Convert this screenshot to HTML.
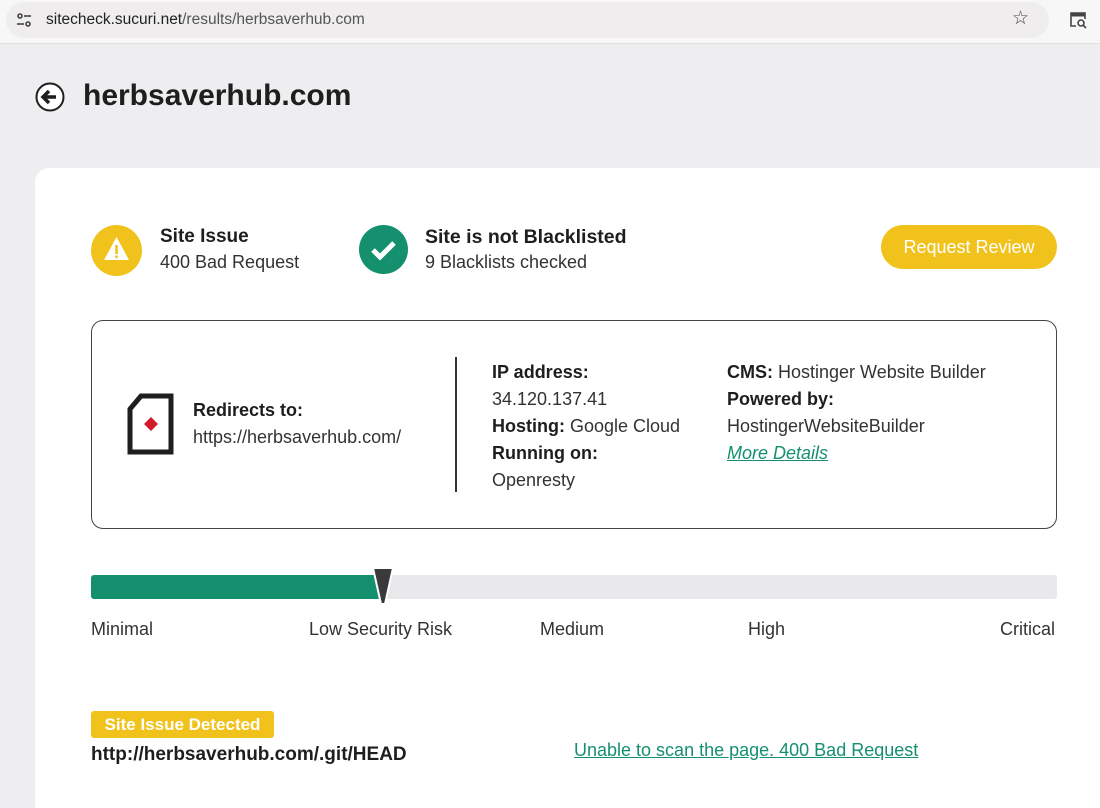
<!DOCTYPE html>
<html><head><style>
*{margin:0;padding:0;box-sizing:border-box}
body{width:1100px;height:779px;overflow:hidden;background:#eeedef;font-family:"Liberation Sans",Arial,sans-serif;color:#2b2b2b;position:relative}
.top{position:absolute;left:0;top:0;width:1100px;height:44px;background:#f8f7f7;border-bottom:1px solid #e2e1e1}
.pill{position:absolute;left:6px;top:2px;width:1043px;height:36px;background:#efeded;border-radius:18px}
.abs{position:absolute}
.card{position:absolute;left:35px;top:168px;width:1080px;height:640px;background:#fff;border-radius:14px 0 0 0}
.b{font-weight:bold;color:#1e1e1e}
.t{font-size:18px}
</style></head><body>
<div class="top"><div class="pill"></div>
<svg class="abs" style="left:14px;top:10px" width="20" height="20" viewBox="0 0 20 20" fill="none" stroke="#444" stroke-width="1.6"><circle cx="6" cy="6" r="2"/><line x1="10" y1="6" x2="17" y2="6"/><circle cx="14" cy="14" r="2"/><line x1="3" y1="14" x2="10" y2="14"/></svg>
<div class="abs" style="left:46px;top:11px;font-size:15.5px;color:#222">sitecheck.sucuri.net<span style="color:#555">/results/herbsaverhub.com</span></div>
<div class="abs" style="left:1012px;top:7px;font-size:19px;color:#444">☆</div>
<svg class="abs" style="left:1068px;top:10px" width="20" height="20" viewBox="0 0 20 20" fill="none" stroke="#444" stroke-width="1.6"><path d="M8 16H3V3h14v6"/><line x1="3" y1="5" x2="17" y2="5" stroke-width="3"/><circle cx="13" cy="13" r="3"/><line x1="15" y1="15" x2="18" y2="18"/></svg>
</div>
<svg class="abs" style="left:35px;top:82px" width="30" height="30" viewBox="0 0 30 30"><circle cx="15" cy="15" r="13.5" fill="#fff" stroke="#1e1e1e" stroke-width="2"/><path d="M8 15h13M14 9l-6 6 6 6" stroke="#1e1e1e" stroke-width="3.5" fill="none"/></svg>
<div class="abs b" style="left:83px;top:79px;font-size:30px">herbsaverhub.com</div>
<div class="card"></div>
<svg class="abs" style="left:91px;top:225px" width="51" height="51" viewBox="0 0 51 51"><circle cx="25.5" cy="25.5" r="25.5" fill="#f2c21c"/><path d="M25.5 12L38 35H13z" fill="#fff"/><rect x="24.2" y="20" width="2.6" height="9" fill="#f2c21c"/><rect x="24.2" y="30.5" width="2.6" height="2.6" fill="#f2c21c"/></svg>
<div class="abs b" style="left:160px;top:226px;font-size:19px">Site Issue</div>
<div class="abs t" style="left:160px;top:252px;color:#333">400 Bad Request</div>
<svg class="abs" style="left:359px;top:225px" width="49" height="49" viewBox="0 0 49 49"><circle cx="24.5" cy="24.5" r="24.5" fill="#14906e"/><path d="M14 25l7 7 14-14" stroke="#fff" stroke-width="5" fill="none"/></svg>
<div class="abs b" style="left:425px;top:226px;font-size:19.5px">Site is not Blacklisted</div>
<div class="abs t" style="left:425px;top:252px;color:#333">9 Blacklists checked</div>
<div class="abs" style="left:881px;top:225px;width:176px;height:44px;border-radius:22px;background:#f2c21c;color:#fff;font-size:18px;text-align:center;line-height:44px">Request Review</div>
<div class="abs" style="left:91px;top:320px;width:966px;height:209px;border:1.5px solid #444;border-radius:12px"></div>
<svg class="abs" style="left:127px;top:393px" width="48" height="62" viewBox="0 0 48 62"><path d="M14 3H44V59H3V16Z" fill="#fff" stroke="#1e1e1e" stroke-width="5"/><path d="M24 24l7 7-7 7-7-7z" fill="#d01c2c"/></svg>
<div class="abs b t" style="left:193px;top:400px">Redirects to:</div>
<div class="abs t" style="left:193px;top:427px;color:#333">https://herbsaverhub.com/</div>
<div class="abs" style="left:455px;top:357px;width:1.5px;height:135px;background:#333"></div>
<div class="abs t" style="left:492px;top:359px;line-height:27px;color:#333"><b class="b">IP address:</b><br>34.120.137.41<br><b class="b">Hosting:</b> Google Cloud<br><b class="b">Running on:</b><br>Openresty</div>
<div class="abs t" style="left:727px;top:359px;line-height:27px;color:#333"><b class="b">CMS:</b> Hostinger Website Builder<br><b class="b">Powered by:</b><br>HostingerWebsiteBuilder<br><i style="color:#14906e;text-decoration:underline">More Details</i></div>
<div class="abs" style="left:91px;top:575px;width:966px;height:24px;background:#e9e8eb;border-radius:3px"></div>
<div class="abs" style="left:91px;top:575px;width:292px;height:24px;background:#14906e;border-radius:3px 0 0 3px"></div>
<svg class="abs" style="left:370px;top:565px" width="26" height="42" viewBox="0 0 26 42"><path d="M3 3h20l-8 36h-4z" fill="#3a3a3c" stroke="#fff" stroke-width="2"/></svg>
<div class="abs t" style="left:91px;top:619px;color:#333">Minimal</div>
<div class="abs t" style="left:309px;top:619px;color:#333">Low Security Risk</div>
<div class="abs t" style="left:540px;top:619px;color:#333">Medium</div>
<div class="abs t" style="left:748px;top:619px;color:#333">High</div>
<div class="abs t" style="left:1000px;top:619px;color:#333">Critical</div>
<div class="abs" style="left:91px;top:711px;width:183px;height:27px;background:#f2c21c;border-radius:3px;color:#fff;font-weight:bold;font-size:17px;text-align:center;line-height:27px">Site Issue Detected</div>
<div class="abs b" style="left:91px;top:744px;font-size:19px">http://herbsaverhub.com/.git/HEAD</div>
<div class="abs t" style="left:574px;top:740px;color:#14906e;text-decoration:underline">Unable to scan the page. 400 Bad Request</div>
</body></html>
